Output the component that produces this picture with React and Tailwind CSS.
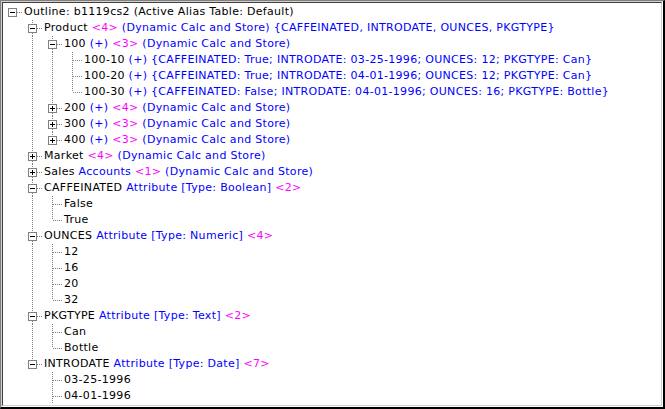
import React from 'react';

const K = 'text-black';
const B = 'text-[#0000ff]';
const M = 'text-[#ff00ff]';

const DCS = '(Dynamic Calc and Store)';

// each row: depth, box ('-' | '+' | null), last sibling?, parts [[cls, text]]
const rows = [
  { d: 0, box: '-', last: true, parts: [[K, 'Outline: b1119cs2 (Active Alias Table: Default)']] },
  { d: 1, box: '-', parts: [[K, 'Product '], [M, '<4>'], [B, ` ${DCS} {CAFFEINATED, INTRODATE, OUNCES, PKGTYPE}`]] },
  { d: 2, box: '-', parts: [[K, '100 '], [B, '(+) '], [M, '<3> '], [B, DCS]] },
  { d: 3, parts: [[K, '100-10 '], [B, '(+) {CAFFEINATED: True; INTRODATE: 03-25-1996; OUNCES: 12; PKGTYPE: Can}']] },
  { d: 3, parts: [[K, '100-20 '], [B, '(+) {CAFFEINATED: True; INTRODATE: 04-01-1996; OUNCES: 12; PKGTYPE: Can}']] },
  { d: 3, last: true, parts: [[K, '100-30 '], [B, '(+) {CAFFEINATED: False; INTRODATE: 04-01-1996; OUNCES: 16; PKGTYPE: Bottle}']] },
  { d: 2, box: '+', parts: [[K, '200 '], [B, '(+) '], [M, '<4> '], [B, DCS]] },
  { d: 2, box: '+', parts: [[K, '300 '], [B, '(+) '], [M, '<3> '], [B, DCS]] },
  { d: 2, box: '+', last: true, parts: [[K, '400 '], [B, '(+) '], [M, '<3> '], [B, DCS]] },
  { d: 1, box: '+', parts: [[K, 'Market '], [M, '<4>'], [B, ` ${DCS}`]] },
  { d: 1, box: '+', parts: [[K, 'Sales '], [B, 'Accounts '], [M, '<1>'], [B, ` ${DCS}`]] },
  { d: 1, box: '-', parts: [[K, 'CAFFEINATED '], [B, 'Attribute [Type: Boolean] '], [M, '<2>']] },
  { d: 2, parts: [[K, 'False']] },
  { d: 2, last: true, parts: [[K, 'True']] },
  { d: 1, box: '-', parts: [[K, 'OUNCES '], [B, 'Attribute [Type: Numeric] '], [M, '<4>']] },
  { d: 2, parts: [[K, '12']] },
  { d: 2, parts: [[K, '16']] },
  { d: 2, parts: [[K, '20']] },
  { d: 2, last: true, parts: [[K, '32']] },
  { d: 1, box: '-', parts: [[K, 'PKGTYPE '], [B, 'Attribute [Type: Text] '], [M, '<2>']] },
  { d: 2, parts: [[K, 'Can']] },
  { d: 2, last: true, parts: [[K, 'Bottle']] },
  { d: 1, box: '-', last: true, parts: [[K, 'INTRODATE '], [B, 'Attribute [Type: Date] '], [M, '<7>']] },
  { d: 2, parts: [[K, '03-25-1996']] },
  // more dates follow below the visible area, so the guide keeps going
  { d: 2, parts: [[K, '04-01-1996']] },
];

// which ancestor columns still have siblings below, per row
const withGuides = () => {
  const open = [];
  return rows.map(r => {
    const guides = open.slice(0, r.d);
    open[r.d] = !r.last;
    open.length = r.d + 1;
    return { ...r, guides };
  });
};

const Dot = (props) => (
  <line {...props} stroke="#808080" strokeWidth="1" strokeDasharray="1 1" shapeRendering="crispEdges" />
);

const Guide = ({ on }) => (
  <svg width="20" height="16" className="shrink-0">
    {on && <Dot x1="10.5" y1="0" x2="10.5" y2="16" />}
  </svg>
);

const Node = ({ root, box, last }) => (
  <svg width="20" height="16" className="shrink-0">
    {!root && <Dot x1="10.5" y1="0" x2="10.5" y2={box ? 4 : 8} />}
    {!last && <Dot x1="10.5" y1={box ? 13 : 8} x2="10.5" y2="16" />}
    <Dot x1={box ? 15 : 11} y1="8.5" x2="20" y2="8.5" />
    {box && (
      <>
        <rect x="6.5" y="4.5" width="8" height="8" fill="#fff" stroke="#808080" shapeRendering="crispEdges" />
        <line x1="8" y1="8.5" x2="13" y2="8.5" stroke="#000" shapeRendering="crispEdges" />
        {box === '+' && <line x1="10.5" y1="6" x2="10.5" y2="11" stroke="#000" shapeRendering="crispEdges" />}
      </>
    )}
  </svg>
);

export default function App() {
  return (
    <div className="w-[665px] h-[409px] bg-white border-t border-l border-t-[#808080] border-l-[#808080] border-r-2 border-b-2 border-r-black border-b-black">
      <div className="h-full border-t border-l border-t-[#d4d0c8] border-l-[#d4d0c8] border-r border-b border-r-white border-b-white">
        <div className="h-full overflow-hidden border-t border-l border-t-[#404040] border-l-[#404040] border-r border-b border-r-[#d4d0c8] border-b-[#d4d0c8] pt-px">
          <div className="-ml-px text-[11px] leading-4 tracking-[0.3px] whitespace-nowrap font-['DejaVu_Sans',sans-serif]">
            {withGuides().map((r, i) => (
              <div key={i} className="flex h-4 items-center">
                {r.guides.map((g, j) => <Guide key={j} on={g} />)}
                <Node root={r.d === 0} box={r.box} last={r.last} />
                <span className="ml-[2px]">
                  {r.parts.map(([c, t], j) => <span key={j} className={c}>{t}</span>)}
                </span>
              </div>
            ))}
          </div>
        </div>
      </div>
    </div>
  );
}
